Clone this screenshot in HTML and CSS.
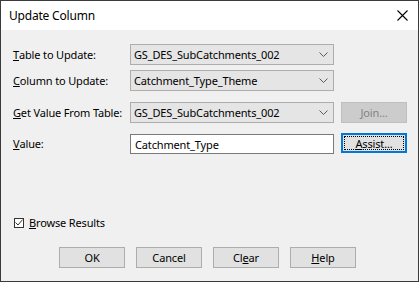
FILE: index.html
```html
<!DOCTYPE html>
<html lang="en">
<head>
<meta charset="UTF-8">
<title>Update Column</title>
<link rel="stylesheet" href="styles.css">
</head>
<body>

<div class="window">
    <div class="titlebar">
        <span class="title">Update Column</span>
        <svg class="close" width="11" height="11" viewBox="0 0 11 11">
            <path d="M0.5 0.5 L10.5 10.5 M10.5 0.5 L0.5 10.5" stroke="#000" stroke-width="1.1" fill="none"/>
        </svg>
    </div>

    <div class="content">
        <div class="form">
            <label class="label r1"><u>T</u>able to Update:</label>
            <div class="combo r1">
                <span>GS_DES_SubCatchments_002</span>
                <svg class="arrow" width="9" height="5" viewBox="0 0 9 5"><path d="M0.5 0.5 L4.5 4.5 L8.5 0.5" stroke="#5a5a5a" fill="none"/></svg>
            </div>

            <label class="label r2"><u>C</u>olumn to Update:</label>
            <div class="combo r2">
                <span>Catchment_Type_Theme</span>
                <svg class="arrow" width="9" height="5" viewBox="0 0 9 5"><path d="M0.5 0.5 L4.5 4.5 L8.5 0.5" stroke="#5a5a5a" fill="none"/></svg>
            </div>

            <label class="label r3"><u>G</u>et Value From Table:</label>
            <div class="combo r3">
                <span>GS_DES_SubCatchments_002</span>
                <svg class="arrow" width="9" height="5" viewBox="0 0 9 5"><path d="M0.5 0.5 L4.5 4.5 L8.5 0.5" stroke="#5a5a5a" fill="none"/></svg>
            </div>
            <div class="btn side disabled r3"><u>J</u>oin...</div>

            <label class="label r4"><u>V</u>alue:</label>
            <div class="textbox r4">Catchment_Type</div>
            <div class="btn side focused r4"><span class="focus-ring"><u>A</u>ssist...</span></div>
        </div>

        <div class="check">
            <span class="box">
                <svg width="8" height="7" viewBox="0 0 8 7"><path d="M0.5 3.5 L3 6 L7.5 0.7" stroke="#333" stroke-width="1" fill="none"/></svg>
            </span>
            <span><u>B</u>rowse Results</span>
        </div>

        <div class="buttons">
            <div class="btn">OK</div>
            <div class="btn">Cancel</div>
            <div class="btn">Cl<u>e</u>ar</div>
            <div class="btn"><u>H</u>elp</div>
        </div>
    </div>
</div>

</body>
</html>
```

FILE: styles.css
```css
body {
    margin: 0;
    padding: 0;
    background: #f0f0f0;
    font-family: 'Noto Sans', 'Open Sans', sans-serif;
    font-size: 11px;
    letter-spacing: -0.15px;
    color: #000;
}

.window {
    width: 417px;
    height: 280px;
    border: 1px solid #3b3b3b;
    background: #f0f0f0;
    display: flex;
    flex-direction: column;
}

.titlebar {
    height: 29px;
    background: #fff;
    display: flex;
    align-items: center;
    justify-content: space-between;
    padding: 0 10px 0 8px;
}

.title {
    font-size: 12px;
    letter-spacing: -0.2px;
    padding-bottom: 1px;
}

.content {
    flex: 1;
    padding: 14px 0 0 12px;
    display: flex;
    flex-direction: column;
}

.form {
    display: grid;
    grid-template-columns: 117px 204px 73px;
    grid-template-rows: 21px 21px 27px 26px;
    row-gap: 5px;
    align-items: end;
}

.label { grid-column: 1; align-self: stretch; }
.combo, .textbox { grid-column: 2; }
.side { grid-column: 3; margin-left: 7px; }

.r1 { grid-row: 1; }
.r2 { grid-row: 2; }
.r3 { grid-row: 3; }
.r4 { grid-row: 4; }

.label {
    display: flex;
    align-items: flex-end;
    padding-bottom: 3px;
}

.combo {
    box-sizing: border-box;
    height: 21px;
    background: #e5e5e5;
    border: 1px solid #adadad;
    display: flex;
    align-items: center;
    justify-content: space-between;
    padding: 0 5px 0 3px;
}

.textbox {
    box-sizing: border-box;
    height: 20px;
    background: #fff;
    border: 1px solid #7a7a7a;
    display: flex;
    align-items: center;
    padding: 0 4px;
}

.btn {
    box-sizing: border-box;
    height: 21px;
    background: #e1e1e1;
    border: 1px solid #adadad;
    display: flex;
    align-items: center;
    justify-content: center;
}

.btn.disabled {
    background: #cccccc;
    border-color: #bfbfbf;
    color: #838383;
    height: 21px;
}

.btn.focused {
    border: 2px solid #0078d7;
    height: 20px;
    padding: 1px;
    margin-bottom: 1px;
}

.focus-ring {
    flex: 1;
    align-self: stretch;
    display: flex;
    align-items: center;
    justify-content: center;
    outline: 1px dotted #000;
    outline-offset: -1px;
}

.check {
    margin-top: 61px;
    display: flex;
    align-items: center;
    gap: 5px;
    padding-left: 1px;
}

.box {
    box-sizing: border-box;
    width: 10px;
    height: 10px;
    border: 1px solid #333;
    background: #fff;
    display: flex;
    align-items: center;
    justify-content: center;
}

.buttons {
    margin-top: 17px;
    margin-left: 46px;
    display: flex;
    gap: 10px;
}

.buttons .btn {
    width: 66px;
    margin-right: 1px;
}
```
